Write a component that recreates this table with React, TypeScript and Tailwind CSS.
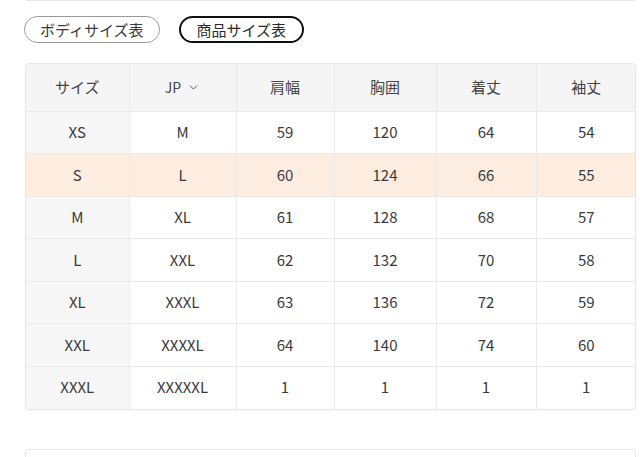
import { ChevronDown } from "lucide-react";

const columns = ["サイズ", "JP", "肩幅", "胸囲", "着丈", "袖丈"];
const widths = ["w-[103px]", "w-[107px]", "w-[98px]", "w-[102px]", "w-[100px]", "w-[100px]"];

const rows = [
  ["XS", "M", "59", "120", "64", "54"],
  ["S", "L", "60", "124", "66", "55"],
  ["M", "XL", "61", "128", "68", "57"],
  ["L", "XXL", "62", "132", "70", "58"],
  ["XL", "XXXL", "63", "136", "72", "59"],
  ["XXL", "XXXXL", "64", "140", "74", "60"],
  ["XXXL", "XXXXXL", "1", "1", "1", "1"],
];

const App = () => {
  return (
    <div
      className="w-[640px] h-[457px] overflow-hidden bg-white text-[#333]"
      style={{ fontFamily: '"Noto Sans CJK JP", "Noto Sans", sans-serif' }}
    >
      <div className="pl-[25px] pr-[4px]">
        {/* previous card bottom edge */}
        <div className="h-[2px] -mt-[1px] border border-t-0 border-[#e6e6e6] rounded-b-[4px]" />

        {/* tabs */}
        <div className="flex items-center gap-[19px] mt-[15px] -ml-[1px]">
          <button className="h-[27px] px-[15px] rounded-full border border-[#9a9a9a] text-[15px] leading-none text-[#3a3a3a]">
            ボディサイズ表
          </button>
          <button className="h-[27px] px-[16px] rounded-full border-2 border-[#111] text-[15px] leading-none text-[#2a2a2a]">
            商品サイズ表
          </button>
        </div>

        {/* table */}
        <div className="mt-[20px] w-[611px] rounded-[4px] border border-[#e6e6e6] overflow-hidden shadow-[0_1px_2px_rgba(0,0,0,0.04)]">
          <table className="w-full border-collapse table-fixed text-[15px]">
            <thead>
              <tr className="h-[47px] bg-[#f5f5f5]">
                {columns.map((c, i) => (
                  <th
                    key={c}
                    className={`${widths[i]} font-normal text-[#444] border-l border-[#eaeaea] first:border-l-0`}
                  >
                    {c === "JP" ? (
                      <span className="inline-flex items-center gap-[6px]">
                        <span className="text-[14px]">JP</span>
                        <ChevronDown size={13} strokeWidth={1.8} className="text-[#555]" />
                      </span>
                    ) : (
                      c
                    )}
                  </th>
                ))}
              </tr>
            </thead>
            <tbody>
              {rows.map((r, ri) => (
                <tr
                  key={r[0]}
                  className={`h-[42.5px] border-t border-[#eaeaea] ${ri === 1 ? "bg-[#fdede0]" : "bg-white"}`}
                >
                  {r.map((v, ci) => (
                    <td
                      key={ci}
                      className={`text-center text-[#3a3a3a] border-l border-[#eaeaea] first:border-l-0 ${
                        ci === 0 && ri !== 1 ? "bg-[#f7f7f7]" : ""
                      }`}
                    >
                      {v}
                    </td>
                  ))}
                </tr>
              ))}
            </tbody>
          </table>
        </div>

        {/* next card top edge */}
        <div className="mt-[39px] h-[20px] w-[611px] border border-b-0 border-[#e6e6e6] rounded-t-[4px]" />
      </div>
    </div>
  );
};

export default App;
